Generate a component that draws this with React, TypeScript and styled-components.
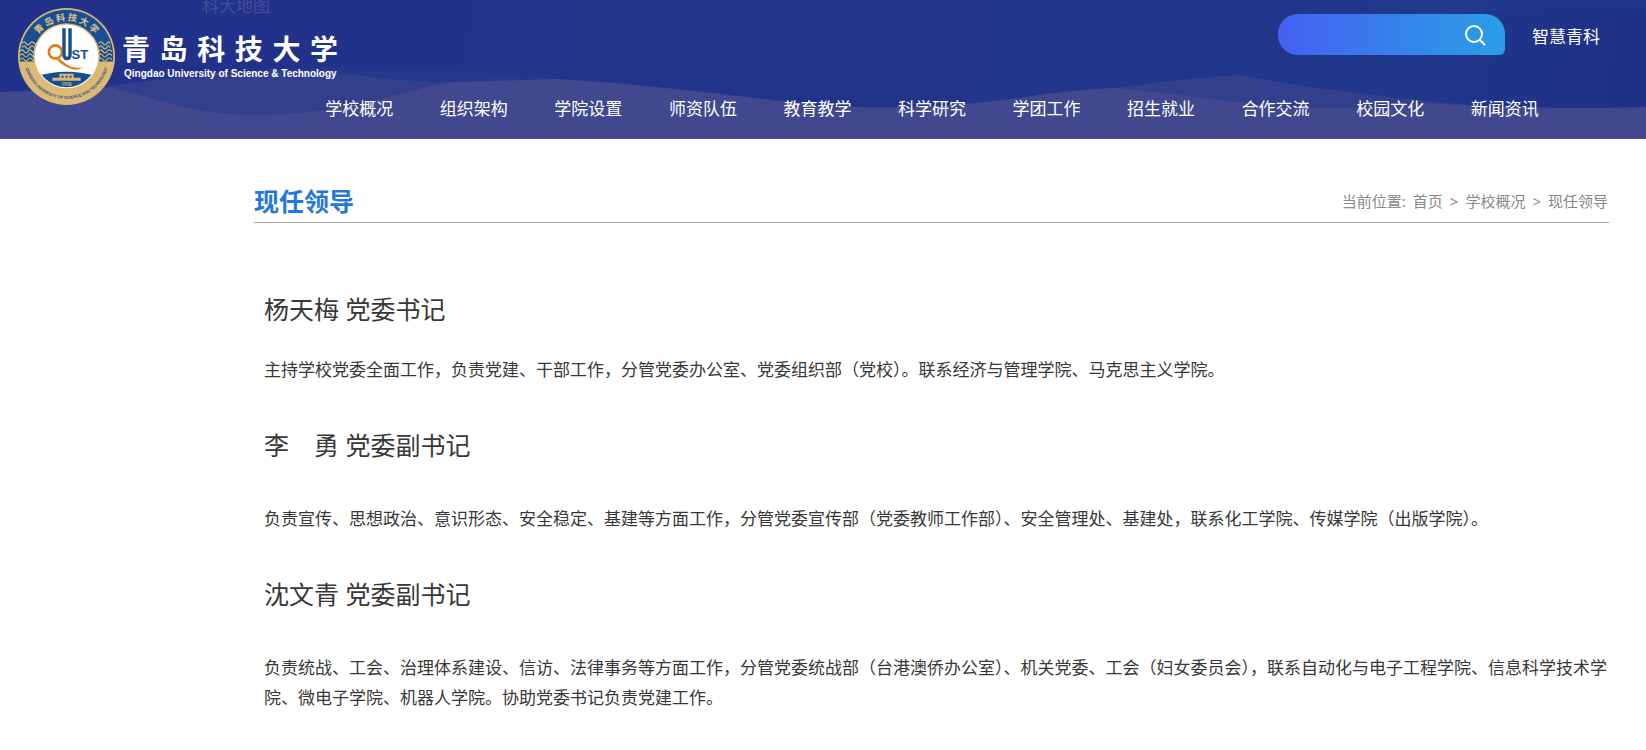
import React from "react";
import styled, { createGlobalStyle } from "styled-components";

const GlobalStyle = createGlobalStyle`
  * { box-sizing: border-box; }
  body {
    margin: 0;
    background: #fff;
    color: #383838;
    font-family: "Noto Sans", "Noto Sans CJK SC", sans-serif;
    font-size: 17px;
    line-height: 30px;
  }
  a { color: inherit; text-decoration: none; }
`;

const Header = styled.header`
  position: relative;
  display: flex;
  flex-direction: column;
  height: 139px;
  overflow: hidden;
  color: #fff;
  background: linear-gradient(100deg, #22318b 0%, #22348a 50%, #20378b 85%, #1f3085 100%);
`;

const Waves = styled.svg`
  position: absolute;
  inset: 0;
  width: 100%;
  height: 100%;
`;

const MapLink = styled.a`
  position: absolute;
  top: -9px;
  left: 202px;
  color: #454f93;
`;

const TopRow = styled.div`
  position: relative;
  display: flex;
  align-items: flex-start;
  justify-content: space-between;
  height: 94px;
  padding: 8px 46px 0 18px;
`;

const Brand = styled.a`
  display: flex;
  gap: 7px;
`;

const Seal = styled.svg`
  flex: none;
  width: 97px;
  height: 97px;
`;

const BrandText = styled.span`
  display: flex;
  flex-direction: column;
  width: 216px;
  padding-top: 22px;
`;

const BrandName = styled.span`
  display: flex;
  justify-content: space-between;
  font-size: 28px;
  font-weight: 700;
  line-height: 38px;
`;

const BrandEnglish = styled.span`
  padding-left: 2px;
  font-family: "Liberation Sans", sans-serif;
  font-size: 10px;
  font-weight: 700;
  line-height: 12px;
  white-space: nowrap;
`;

const Tools = styled.div`
  display: flex;
  align-items: flex-start;
  gap: 27px;
  padding-top: 6px;
`;

const SearchForm = styled.form`
  display: flex;
  align-items: center;
  width: 227px;
  height: 41px;
  padding: 0 18px;
  border-radius: 20px 20px 6px 20px;
  background: linear-gradient(90deg, #4460f2, #2a9fe6);
`;

const SearchInput = styled.input`
  flex: 1;
  min-width: 0;
  border: 0;
  outline: 0;
  background: transparent;
  color: #fff;
  font: inherit;
`;

const SearchButton = styled.button`
  display: flex;
  padding: 0;
  border: 0;
  background: transparent;
  color: #fff;
  cursor: pointer;
`;

const PortalLink = styled.a`
  padding-top: 8px;
`;

const Nav = styled.nav`
  position: relative;
  display: grid;
  grid-template-columns: repeat(11, 1fr);
  margin: 0 84px 0 302px;
  text-align: center;
  white-space: nowrap;
`;

const Main = styled.main`
  margin: 0 37px 0 254px;
`;

const TitleBar = styled.div`
  display: flex;
  align-items: flex-end;
  justify-content: space-between;
  height: 84px;
  padding-bottom: 6px;
  border-bottom: 1px solid #aaa;
`;

const Title = styled.h1`
  margin: 0;
  color: #2277dc;
  font-size: 25px;
  line-height: 30px;
`;

const Breadcrumb = styled.nav`
  display: flex;
  gap: 7px;
  padding-right: 1px;
  color: #888;
  font-size: 15px;
`;

const Article = styled.article`
  padding: 71px 0 40px 10px;
`;

const Leader = styled.section`
  & + & { margin-top: 45px; }
`;

const LeaderName = styled.h2<{ $compact?: boolean }>`
  margin: 0 0 ${(p) => (p.$compact ? 31 : 44)}px;
  font-size: 25px;
  font-weight: 400;
  line-height: 30px;
`;

const Duties = styled.p`
  margin: 0;
`;

const navItems = [
  "学校概况", "组织架构", "学院设置", "师资队伍", "教育教学", "科学研究",
  "学团工作", "招生就业", "合作交流", "校园文化", "新闻资讯",
];

const leaders = [
  {
    name: "杨天梅 党委书记",
    duties: "主持学校党委全面工作，负责党建、干部工作，分管党委办公室、党委组织部（党校）。联系经济与管理学院、马克思主义学院。",
  },
  {
    name: "李　勇 党委副书记",
    duties: "负责宣传、思想政治、意识形态、安全稳定、基建等方面工作，分管党委宣传部（党委教师工作部）、安全管理处、基建处，联系化工学院、传媒学院（出版学院）。",
  },
  {
    name: "沈文青 党委副书记",
    duties: "负责统战、工会、治理体系建设、信访、法律事务等方面工作，分管党委统战部（台港澳侨办公室）、机关党委、工会（妇女委员会），联系自动化与电子工程学院、信息科学技术学院、微电子学院、机器人学院。协助党委书记负责党建工作。",
  },
];

const rippleRows = [35, 39, 43, 47, 51];

function SealMark() {
  return (
    <Seal viewBox="0 0 96 96" aria-hidden="true">
      <defs>
        <path id="ringTop" d="M12.5 48 A35.5 35.5 0 0 1 83.5 48" />
        <path id="ringBottom" d="M6 48 A42 42 0 0 0 90 48" />
        <clipPath id="innerDisc"><circle cx="48" cy="48" r="30.5" /></clipPath>
        <clipPath id="bandTop"><rect width="96" height="53" /></clipPath>
      </defs>
      <circle cx="48" cy="48" r="48" fill="#ddb974" />
      <circle cx="48" cy="48" r="46.3" fill="#174f95" clipPath="url(#bandTop)" />
      <g fill="none" stroke="#ddb974" strokeWidth="1.2">
        {rippleRows.map((y) => (
          <React.Fragment key={y}>
            <path d={`M${y < 40 ? 4 : 2} ${y} q2 -3 4 0 t4 0 t4 0 t3 -1`} />
            <path d={`M80 ${y} q2 -3 4 0 t4 0 t${y < 40 ? 3 : 5} 0`} />
          </React.Fragment>
        ))}
      </g>
      <circle cx="48" cy="48" r="33" fill="#ddb974" />
      <circle cx="48" cy="48" r="31.5" fill="#fff" />
      <g clipPath="url(#innerDisc)">
        <path d="M16 68 Q48 58 80 68 V84 H16Z" fill="#174f95" />
        <path d="M41 65h14v2h-14z M34 69h28v3h-28z M41 67h2v5h-2z M45 67h2v5h-2z M49 67h2v5h-2z M53 67h2v5h-2z" fill="#ddb974" />
        <text x="48" y="77" fill="#ddb974" fontSize="5" fontWeight="700" textAnchor="middle" fontFamily="Liberation Serif">1950</text>
      </g>
      <circle cx="37" cy="43.5" r="6.5" fill="none" stroke="#e47b14" strokeWidth="2.6" />
      <path d="M36 48 Q42 50 47 55 T65 59 Q57 63 49 59 T36 48Z" fill="#e47b14" />
      <path d="M45.5 20 V46 Q45.5 50 48.5 50 Q51.5 50 51.5 46 V20" fill="none" stroke="#174f95" strokeWidth="3.4" />
      <text x="53" y="50" fill="#174f95" fontSize="13" fontWeight="700" fontFamily="Liberation Sans">ST</text>
      <text fill="#e6c47f" fontSize="9" fontWeight="700" fontFamily="Noto Sans CJK SC" textAnchor="middle">
        <textPath href="#ringTop" startOffset="50%">青 岛 科 技 大 学</textPath>
      </text>
      <text fill="#174f95" fontSize="4" fontWeight="700" fontFamily="Liberation Sans" textAnchor="middle">
        <textPath href="#ringBottom" startOffset="50%">QINGDAO UNIVERSITY OF SCIENCE AND TECHNOLOGY</textPath>
      </text>
    </Seal>
  );
}

export default function App() {
  return (
    <>
      <GlobalStyle />
      <Header>
        <Waves viewBox="0 0 1646 139" preserveAspectRatio="none" aria-hidden="true">
          <path d="M1370 22 Q1500 6 1646 9 V0 H1370Z" fill="#1f3b8d" opacity=".5" />
          <path d="M240 72 Q380 60 557 79 L450 86Z" fill="#27378b" />
          <path d="M0 92 L105 87 Q190 74 260 70 Q320 70 380 78 Q420 82 453 82 V139 H0Z" fill="#323f8c" />
          <path d="M1105 89 Q1180 79 1240 75 Q1265 80 1310 87 Q1400 99 1480 106 V139 H1105Z" fill="#323f8c" />
          <path d="M0 92 Q60 91 108 87 C165 100 195 115 253 115 C350 114 385 94 453 82 Q500 81 557 79 C660 85 740 97 800 103 C850 109 905 108 965 104 C1015 100 1060 90 1112 88 C1190 94 1250 108 1340 108 Q1380 108 1423 103 Q1480 107 1560 108 Q1610 108 1646 107 V139 H0Z" fill="#41488e" />
        </Waves>
        <MapLink href="#map">科大地图</MapLink>
        <TopRow>
          <Brand href="#home">
            <SealMark />
            <BrandText>
              <BrandName>
                {"青岛科技大学".split("").map((char) => <span key={char}>{char}</span>)}
              </BrandName>
              <BrandEnglish>Qingdao University of Science &amp; Technology</BrandEnglish>
            </BrandText>
          </Brand>
          <Tools>
            <SearchForm role="search" onSubmit={(e) => e.preventDefault()}>
              <SearchInput type="text" aria-label="搜索" />
              <SearchButton type="submit" aria-label="搜索">
                <svg width="24" height="24" viewBox="0 0 24 24" fill="none" stroke="currentColor" strokeWidth="2" strokeLinecap="round">
                  <circle cx="11" cy="11" r="8" />
                  <path d="M17 17 L21.5 21.5" />
                </svg>
              </SearchButton>
            </SearchForm>
            <PortalLink href="#smart">智慧青科</PortalLink>
          </Tools>
        </TopRow>
        <Nav aria-label="主导航">
          {navItems.map((item) => <a key={item} href="#nav">{item}</a>)}
        </Nav>
      </Header>
      <Main>
        <TitleBar>
          <Title>现任领导</Title>
          <Breadcrumb aria-label="当前位置">
            <span>当前位置:</span>
            <a href="#home">首页</a>
            <span>&gt;</span>
            <a href="#about">学校概况</a>
            <span>&gt;</span>
            <a href="#leaders">现任领导</a>
          </Breadcrumb>
        </TitleBar>
        <Article>
          {leaders.map((leader, index) => (
            <Leader key={leader.name}>
              <LeaderName $compact={index === 0}>{leader.name}</LeaderName>
              <Duties>{leader.duties}</Duties>
            </Leader>
          ))}
        </Article>
      </Main>
    </>
  );
}
